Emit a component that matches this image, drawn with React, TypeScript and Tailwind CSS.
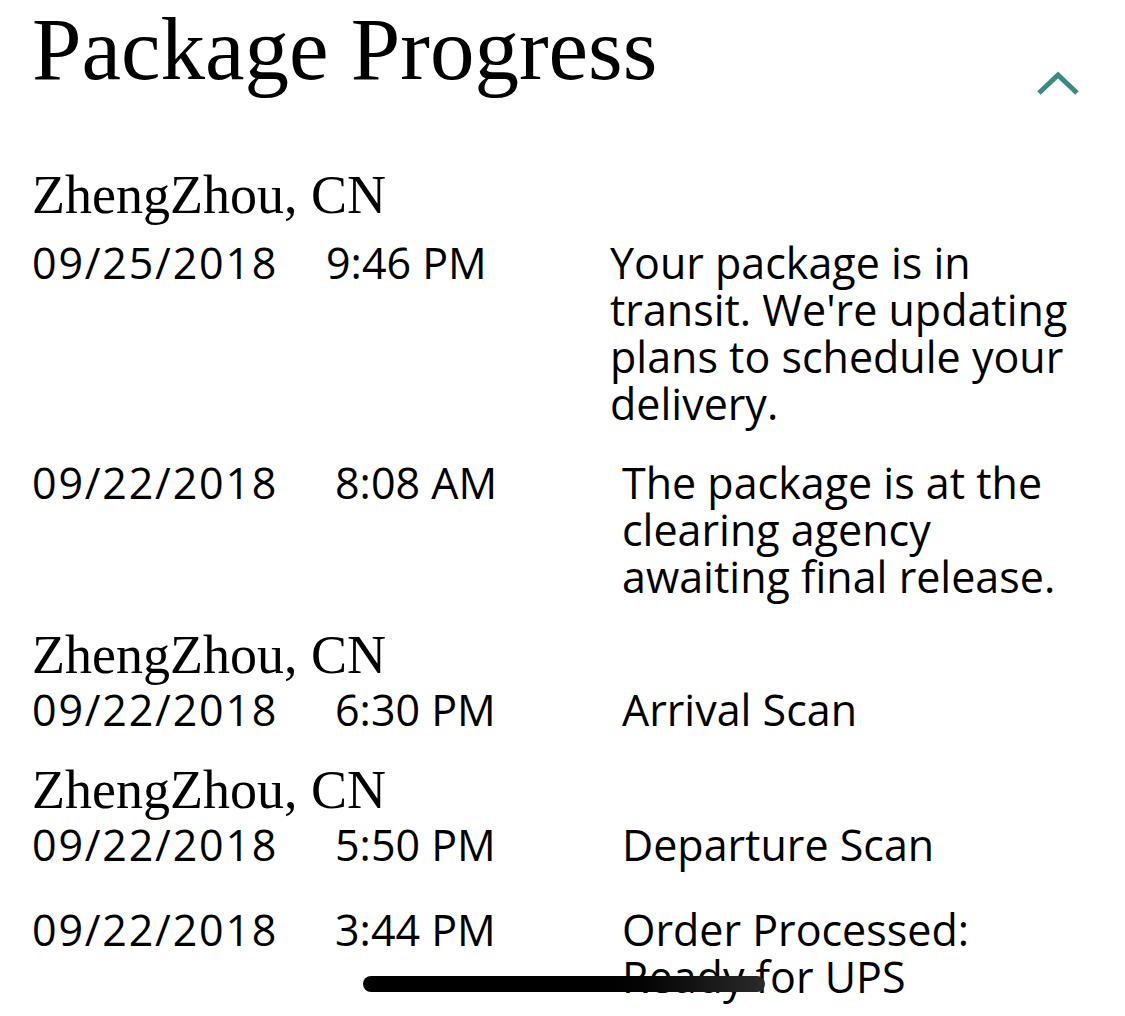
import { Fragment } from 'react';

type Scan = {
  date: string;
  time: string;
  text: string;
  gap: string;
  cols: string;
  descW: string;
};

type Stop = {
  place: string;
  gap: string;
  scans: Scan[];
};

const stops: Stop[] = [
  {
    place: 'ZhengZhou, CN',
    gap: 'mt-[76px]',
    scans: [
      {
        date: '09/25/2018',
        time: '9:46 PM',
        text: "Your package is in transit. We're updating plans to schedule your delivery.",
        gap: 'mt-[22px]',
        cols: 'grid-cols-[294px_284px_auto]',
        descW: 'w-[480px]',
      },
      {
        date: '09/22/2018',
        time: '8:08 AM',
        text: 'The package is at the clearing agency awaiting final release.',
        gap: 'mt-[32px]',
        cols: 'grid-cols-[303px_287px_auto]',
        descW: 'w-[460px]',
      },
    ],
  },
  {
    place: 'ZhengZhou, CN',
    gap: 'mt-[33px]',
    scans: [
      {
        date: '09/22/2018',
        time: '6:30 PM',
        text: 'Arrival Scan',
        gap: 'mt-[9px]',
        cols: 'grid-cols-[303px_287px_auto]',
        descW: 'w-[460px]',
      },
    ],
  },
  {
    place: 'ZhengZhou, CN',
    gap: 'mt-[35px]',
    scans: [
      {
        date: '09/22/2018',
        time: '5:50 PM',
        text: 'Departure Scan',
        gap: 'mt-[9px]',
        cols: 'grid-cols-[303px_287px_auto]',
        descW: 'w-[460px]',
      },
      {
        date: '09/22/2018',
        time: '3:44 PM',
        text: 'Order Processed: Ready for UPS',
        gap: 'mt-[38px]',
        cols: 'grid-cols-[303px_287px_auto]',
        descW: 'w-[460px]',
      },
    ],
  },
];

export default function App() {
  return (
    <div className="relative min-h-screen overflow-hidden bg-white text-black">
      {/* Header */}
      <div className="flex items-start justify-between pl-[32px] pr-[44px] pt-[5px]">
        <h1 className="font-['Liberation_Serif',serif] text-[89px] leading-none">Package Progress</h1>
        <svg className="mt-[64px]" width="46" height="28" viewBox="0 0 46 28" fill="none">
          <polyline points="4,24 23,6 42,24" stroke="#3b8a82" strokeWidth="5" />
        </svg>
      </div>

      <div className="pl-[32px]">
        {stops.map((stop, i) => (
          <Fragment key={i}>
            <p className={`${stop.gap} font-['Liberation_Serif',serif] text-[54px] leading-[44px]`}>{stop.place}</p>
            {stop.scans.map((s, j) => (
              <div
                key={j}
                className={`${s.gap} grid ${s.cols} font-['Open_Sans',sans-serif] text-[43px] leading-[47px]`}
              >
                <span className="tracking-[1.8px]">{s.date}</span>
                <span>{s.time}</span>
                <span className={s.descW}>{s.text}</span>
              </div>
            ))}
          </Fragment>
        ))}
      </div>

      {/* home indicator */}
      <div className="absolute left-[363px] top-[976px] h-[16px] w-[402px] rounded-full bg-gradient-to-r from-black via-black to-[#2b2b2b]" />
    </div>
  );
}
